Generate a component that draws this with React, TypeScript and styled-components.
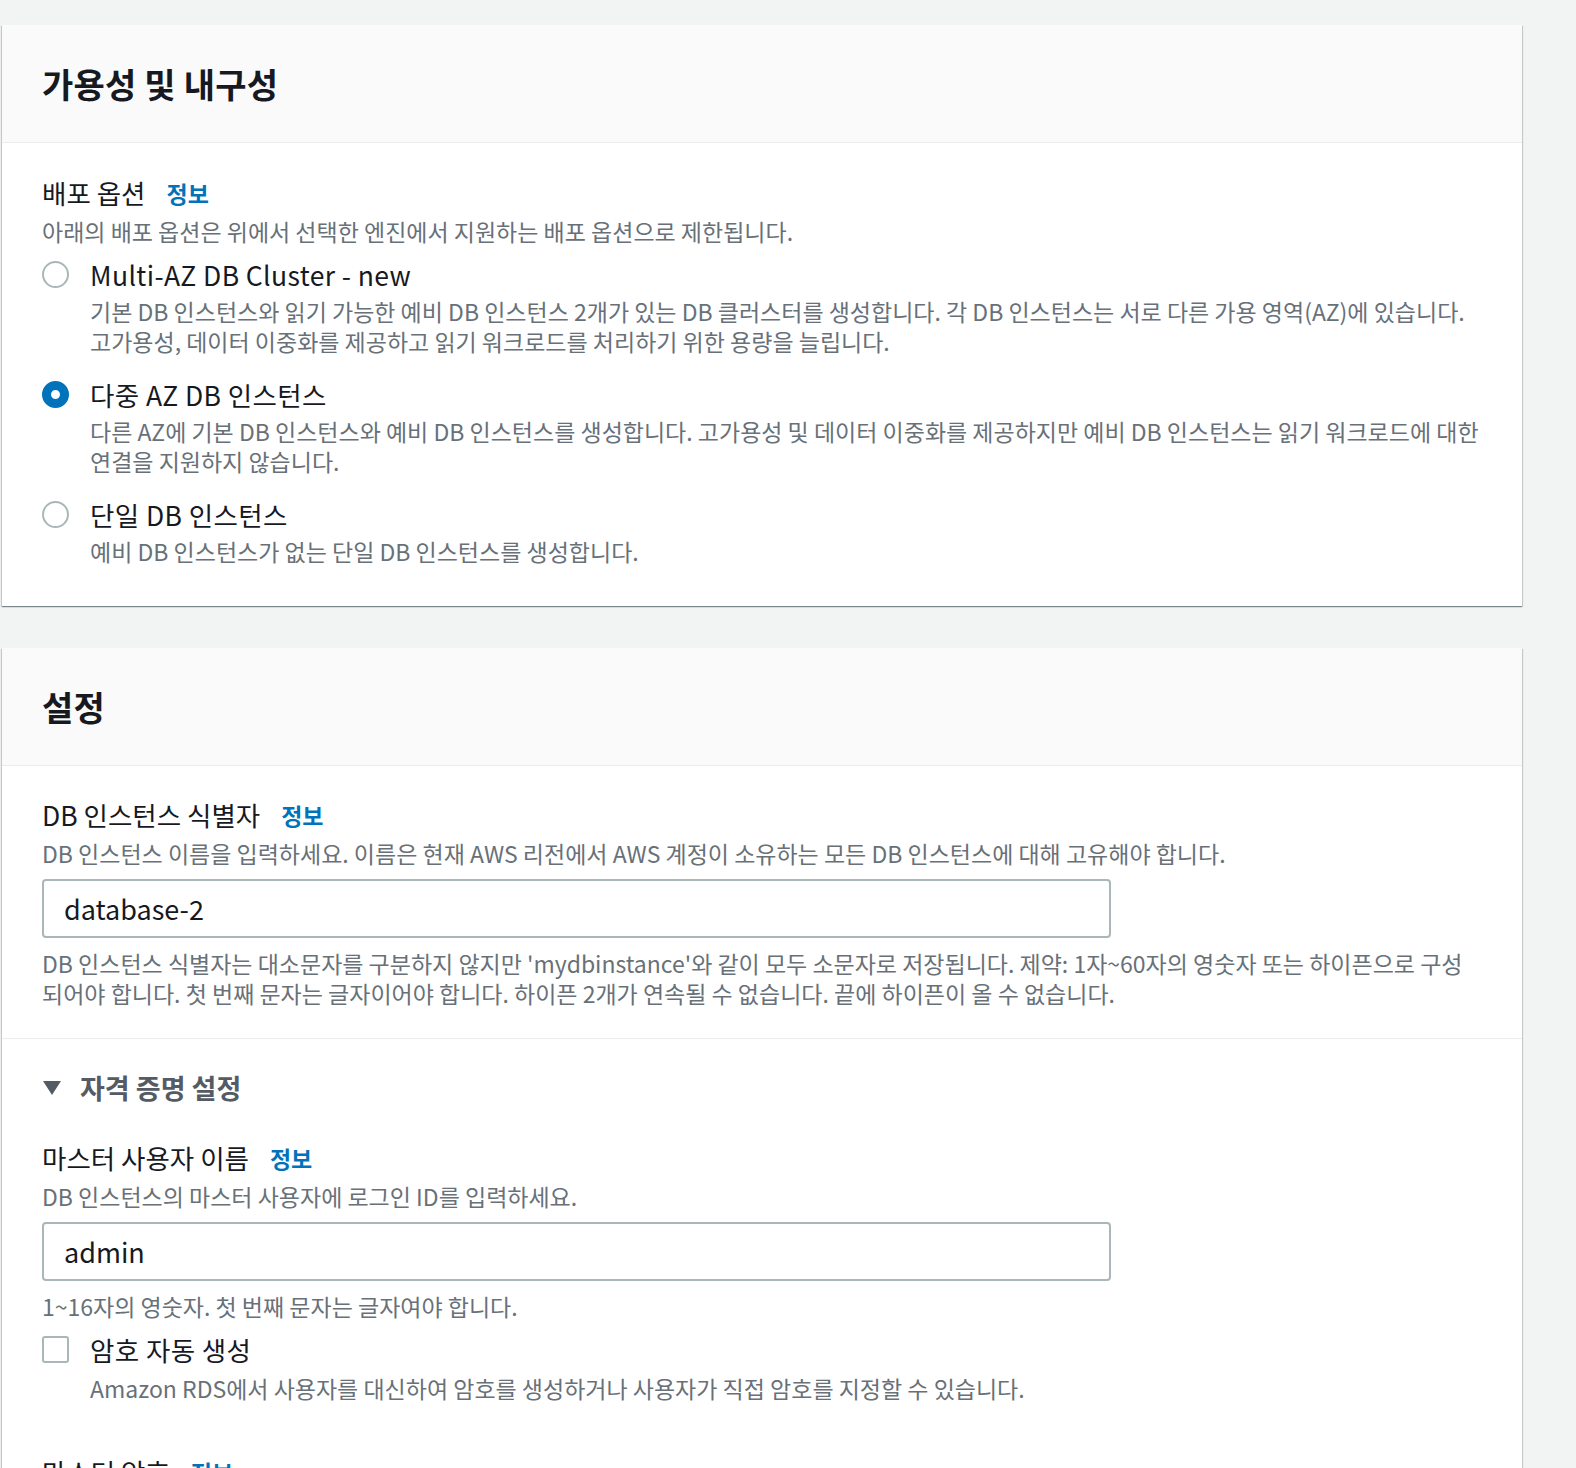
import React from "react";
import styled, { createGlobalStyle } from "styled-components";

const Global = createGlobalStyle`
  html, body { margin: 0; padding: 0; background: #f2f3f3; }
  body {
    font-family: "Noto Sans CJK KR", "Noto Sans", sans-serif;
    color: #16191f;
    height: 1468px;
    overflow: hidden;
  }
`;

const Page = styled.div`
  display: flex;
  flex-direction: column;
  gap: 42px;
  padding: 25px 0 0 2px;
  width: 1520px;
`;

const Card = styled.section`
  background: #ffffff;
  box-shadow: 0 1px 1px 0 rgba(0, 28, 36, 0.3), 1px 1px 1px 0 rgba(0, 28, 36, 0.15),
    -1px 1px 1px 0 rgba(0, 28, 36, 0.15);
`;

const Header = styled.header`
  height: 117px;
  display: flex;
  align-items: center;
  padding: 0 40px;
  background: #fafafa;
  border-bottom: 1px solid #eaeded;
  box-sizing: content-box;
`;

const Title = styled.h2`
  margin: 0;
  font-size: 34px;
  font-weight: 700;
  line-height: 40px;
  letter-spacing: 0.2px;
  color: #16191f;
`;

const Body = styled.div<{ $top: number; $bottom: number; $divider?: boolean }>`
  padding: ${(p) => p.$top}px 40px ${(p) => p.$bottom}px;
  border-bottom: ${(p) => (p.$divider ? "1px solid #eaeded" : "none")};
`;

const Label = styled.div`
  display: flex;
  align-items: center;
  gap: 21px;
  font-size: 26.5px;
  line-height: 30px;
  color: #16191f;
`;

const Info = styled.a`
  font-size: 23px;
  font-weight: 700;
  color: #0073bb;
  text-decoration: none;
`;

const Desc = styled.div<{ $mt?: number }>`
  margin-top: ${(p) => p.$mt ?? 8}px;
  font-size: 23px;
  line-height: 30px;
  color: #687078;
  white-space: nowrap;
`;

const OptionList = styled.div`
  display: flex;
  flex-direction: column;
  gap: 24px;
  margin-top: 14px;
`;

const Option = styled.div`
  display: grid;
  grid-template-columns: 48px 1fr;
  align-items: start;
`;

const Radio = styled.span<{ $checked?: boolean }>`
  width: 27px;
  height: 27px;
  margin-top: 1px;
  border-radius: 50%;
  box-sizing: border-box;
  border: ${(p) => (p.$checked ? "9px solid #0073bb" : "2px solid #aab7b8")};
  background: #fff;
`;

const Check = styled.span`
  width: 27px;
  height: 27px;
  margin-top: 1px;
  border-radius: 3px;
  box-sizing: border-box;
  border: 2px solid #aab7b8;
  background: #fff;
`;

const OptionText = styled.div`
  display: flex;
  flex-direction: column;
`;

const OptionLabel = styled.div`
  font-size: 26.5px;
  line-height: 30px;
  letter-spacing: 0.4px;
  color: #16191f;
`;

const Input = styled.div`
  margin-top: 11px;
  width: 1069px;
  height: 59px;
  box-sizing: border-box;
  border: 2px solid #aab7b8;
  border-radius: 4px;
  display: flex;
  align-items: center;
  padding: 0 20px;
  font-size: 27px;
  color: #16191f;
`;

const Expander = styled.div`
  display: flex;
  align-items: center;
  gap: 18px;
  font-size: 27px;
  font-weight: 700;
  line-height: 30px;
  color: #545b64;
`;

const Field = styled.div<{ $mt?: number }>`
  margin-top: ${(p) => p.$mt ?? 0}px;
`;

const CheckRow = styled(Option)`
  margin-top: 14px;
`;

export default function App() {
  return (
    <>
      <Global />
      <Page>
        <Card>
          <Header>
            <Title>가용성 및 내구성</Title>
          </Header>
          <Body $top={35} $bottom={40}>
            <Label>
              배포 옵션 <Info>정보</Info>
            </Label>
            <Desc>아래의 배포 옵션은 위에서 선택한 엔진에서 지원하는 배포 옵션으로 제한됩니다.</Desc>
            <OptionList>
              <Option>
                <Radio />
                <OptionText>
                  <OptionLabel>Multi-AZ DB Cluster - new</OptionLabel>
                  <Desc $mt={6}>
                    기본 DB 인스턴스와 읽기 가능한 예비 DB 인스턴스 2개가 있는 DB 클러스터를 생성합니다. 각 DB 인스턴스는 서로 다른 가용 영역(AZ)에 있습니다.
                    <br />
                    고가용성, 데이터 이중화를 제공하고 읽기 워크로드를 처리하기 위한 용량을 늘립니다.
                  </Desc>
                </OptionText>
              </Option>
              <Option>
                <Radio $checked />
                <OptionText>
                  <OptionLabel>다중 AZ DB 인스턴스</OptionLabel>
                  <Desc $mt={6}>
                    다른 AZ에 기본 DB 인스턴스와 예비 DB 인스턴스를 생성합니다. 고가용성 및 데이터 이중화를 제공하지만 예비 DB 인스턴스는 읽기 워크로드에 대한
                    <br />
                    연결을 지원하지 않습니다.
                  </Desc>
                </OptionText>
              </Option>
              <Option>
                <Radio />
                <OptionText>
                  <OptionLabel>단일 DB 인스턴스</OptionLabel>
                  <Desc $mt={6}>예비 DB 인스턴스가 없는 단일 DB 인스턴스를 생성합니다.</Desc>
                </OptionText>
              </Option>
            </OptionList>
          </Body>
        </Card>

        <Card>
          <Header>
            <Title>설정</Title>
          </Header>
          <Body $top={34} $bottom={30} $divider>
            <Label>
              DB 인스턴스 식별자 <Info>정보</Info>
            </Label>
            <Desc>DB 인스턴스 이름을 입력하세요. 이름은 현재 AWS 리전에서 AWS 계정이 소유하는 모든 DB 인스턴스에 대해 고유해야 합니다.</Desc>
            <Input>database-2</Input>
            <Desc $mt={10}>
              DB 인스턴스 식별자는 대소문자를 구분하지 않지만 'mydbinstance'와 같이 모두 소문자로 저장됩니다. 제약: 1자~60자의 영숫자 또는 하이픈으로 구성
              <br />
              되어야 합니다. 첫 번째 문자는 글자이어야 합니다. 하이픈 2개가 연속될 수 없습니다. 끝에 하이픈이 올 수 없습니다.
            </Desc>
          </Body>
          <Body $top={34} $bottom={40}>
            <Expander>
              <svg width="20" height="16" viewBox="0 0 20 16">
                <path d="M1 1 H19 L10 15 Z" fill="#545b64" />
              </svg>
              자격 증명 설정
            </Expander>
            <Field $mt={40}>
              <Label>
                마스터 사용자 이름 <Info>정보</Info>
              </Label>
              <Desc>DB 인스턴스의 마스터 사용자에 로그인 ID를 입력하세요.</Desc>
              <Input>admin</Input>
              <Desc $mt={10}>1~16자의 영숫자. 첫 번째 문자는 글자여야 합니다.</Desc>
              <CheckRow>
                <Check />
                <OptionText>
                  <OptionLabel>암호 자동 생성</OptionLabel>
                  <Desc>Amazon RDS에서 사용자를 대신하여 암호를 생성하거나 사용자가 직접 암호를 지정할 수 있습니다.</Desc>
                </OptionText>
              </CheckRow>
            </Field>
            <Field $mt={54}>
              <Label>
                마스터 암호 <Info>정보</Info>
              </Label>
            </Field>
          </Body>
        </Card>
      </Page>
    </>
  );
}
